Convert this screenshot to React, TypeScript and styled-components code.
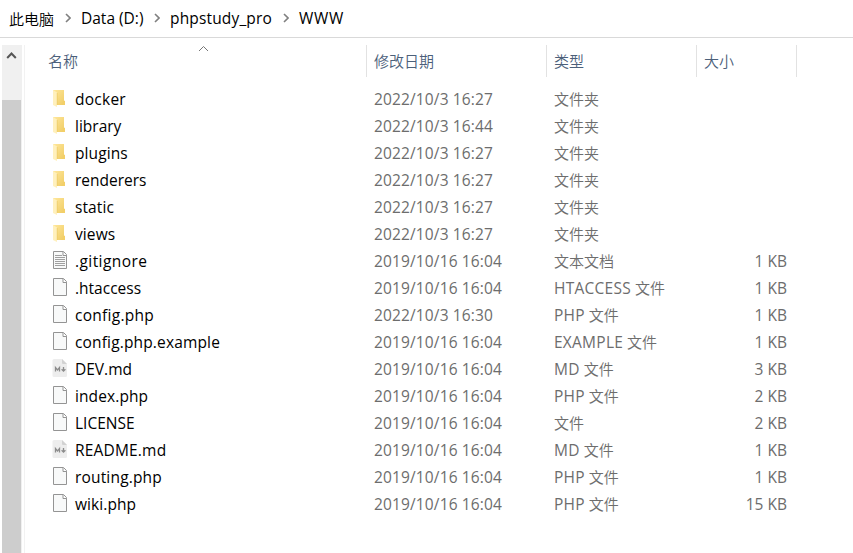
import React from "react";
import styled, { createGlobalStyle } from "styled-components";

const GlobalStyle = createGlobalStyle`
  * { box-sizing: border-box; }
  body {
    margin: 0;
    background: #fff;
    overflow: hidden;
    font-family: "Open Sans", "Noto Sans CJK SC", sans-serif;
    font-size: 15px;
    color: #000;
  }
`;

const Window = styled.div`
  display: flex;
  flex-direction: column;
  width: 853px;
  height: 553px;
  background: #fff;
  overflow: hidden;
`;

const AddressBar = styled.nav`
  display: flex;
  align-items: center;
  height: 38px;
  flex: none;
  padding: 0 0 1px 9px;
  border-bottom: 1px solid #d9d9d9;
`;

const Crumb = styled.span<{ $width: number; $size: number; $tracking: number }>`
  width: ${(p) => p.$width}px;
  line-height: 22px;
  font-size: ${(p) => p.$size}px;
  letter-spacing: ${(p) => p.$tracking}px;
  white-space: nowrap;
`;

const CrumbArrow = styled.svg`
  width: 6px;
  height: 10px;
  flex: none;
  margin: 0 10px 1px;
`;

const Body = styled.div`
  display: flex;
  flex: 1;
  min-height: 0;
  padding: 7px 0 0 2px;
`;

const ScrollTrack = styled.div`
  display: flex;
  flex-direction: column;
  width: 20px;
  background: #f0f0f0;
`;

const ScrollUp = styled.div`
  display: flex;
  justify-content: center;
  height: 55px;
  padding: 6px 1px 0 0;
`;

const ScrollThumb = styled.div`
  flex: 1;
  width: 19px;
  background: #cdcdcd;
`;

const Pane = styled.main`
  flex: 1;
  margin-left: 2px;
  border-left: 1px solid #f2f2f2;
`;

const Header = styled.div`
  display: grid;
  grid-template-columns: 342px 180px 150px 100px;
  grid-template-rows: 32px;
  height: 32px;
  color: #4c607a;
`;

const HeaderCell = styled.div`
  position: relative;
  padding: 0 0 0 7px;
  line-height: 31px;
  font-family: "Noto Sans CJK SC", sans-serif;
  font-weight: 350;
  border-right: 1px solid #e2e2e2;

  &:first-child { padding-left: 23px; }
`;

const SortMark = styled.svg`
  position: absolute;
  left: 173px;
  top: 0;
`;

const FileRow = styled.div`
  display: grid;
  grid-template-columns: 24px 299px 180px 150px 83px;
  grid-template-rows: 27px;
  align-items: center;
  height: 27px;
  padding-left: 26px;
  color: #6d6d6d;
  line-height: 27px;
  white-space: nowrap;
`;

const Rows = styled.div`
  padding-top: 9px;
`;

const Name = styled.span<{ $tracking: number }>`
  color: #000;
  font-size: 15.5px;
  letter-spacing: ${(p) => p.$tracking}px;
`;

const DateCell = styled.span`
  font-size: 15.5px;
  letter-spacing: 0.14px;
`;

const TypeCell = styled.span`
  display: flex;
  align-items: baseline;
  align-self: start;
  gap: 4px;
`;

const Extension = styled.span`
  font-size: 15.5px;
  letter-spacing: 0.25px;
`;

const Hanzi = styled.span`
  font-family: "Noto Sans CJK SC", sans-serif;
  font-weight: 350;
  line-height: 25px;
`;

const SizeCell = styled.span`
  text-align: right;
  font-size: 15.5px;
`;

const IconSvg = styled.svg`
  display: block;
  margin: -4px 0 0 -1px;
`;

type Kind = "folder" | "text" | "file" | "md";

function FolderIcon() {
  return (
    <IconSvg width="18" height="20" viewBox="0 0 18 20">
      <defs>
        <linearGradient id="folderBack" x1="0" x2="1" y1="0" y2="1">
          <stop offset="0" stopColor="#ffe79b" />
          <stop offset="1" stopColor="#efcb62" />
        </linearGradient>
      </defs>
      <path d="M3 2H14V12.5L15 13V17H3Z" fill="url(#folderBack)" />
      <path d="M13 13H15V17H13Z" fill="#f3cf68" />
      <path d="M3 2L7 4.500V19L3 17Z" fill="#fff0bd" />
      <path d="M7.200 5V17" stroke="#ebc75f" strokeWidth=".6" />
    </IconSvg>
  );
}

function PageIcon({ lines }: { lines?: boolean }) {
  return (
    <IconSvg width="18" height="20" viewBox="0 0 18 20">
      <path d="M3.500 1.500H13.500L16.500 4.500V18.500H3.500Z" fill="#f8f9f9" stroke="#949494" />
      <path d="M13 2V5.500H16.500" fill="#fff" stroke="#949494" />
      {lines && (
        <path
          d="M5 5.500H12M5 7.500H15M5 9.500H15M5 11.500H15M5 13.500H15M5 15.500H15"
          stroke="#a0a0a0"
        />
      )}
    </IconSvg>
  );
}

function MarkdownIcon() {
  return (
    <IconSvg width="18" height="20" viewBox="0 0 18 20">
      <path d="M4 1H12L17 6V17.5Q17 19 15.5 19H4Q2.5 19 2.5 17.5V2.5Q2.5 1 4 1Z" fill="#ededed" />
      <path d="M12 1L17 6H13Q12 6 12 5Z" fill="#d2d2d2" />
      <path d="M5.500 13.500V9.500L7.500 12L9.500 9.500V13.500" fill="none" stroke="#8b8b8b" strokeWidth="1.300" />
      <path d="M13.500 9V12.800M11.600 11.300L13.500 13.200L15.400 11.300" fill="none" stroke="#8b8b8b" strokeWidth="1.300" />
    </IconSvg>
  );
}

function FileIcon({ kind }: { kind: Kind }) {
  if (kind === "folder") return <FolderIcon />;
  if (kind === "md") return <MarkdownIcon />;
  return <PageIcon lines={kind === "text"} />;
}

interface Entry {
  kind: Kind;
  name: string;
  date: string;
  extension?: string;
  type: string;
  size?: string;
  tracking: number;
}

const entries: Entry[] = [
  { kind: "folder", name: "docker", date: "2022/10/3 16:27", type: "文件夹", tracking: 0.25 },
  { kind: "folder", name: "library", date: "2022/10/3 16:44", type: "文件夹", tracking: 0 },
  { kind: "folder", name: "plugins", date: "2022/10/3 16:27", type: "文件夹", tracking: 0.1 },
  { kind: "folder", name: "renderers", date: "2022/10/3 16:27", type: "文件夹", tracking: 0 },
  { kind: "folder", name: "static", date: "2022/10/3 16:27", type: "文件夹", tracking: 0.1 },
  { kind: "folder", name: "views", date: "2022/10/3 16:27", type: "文件夹", tracking: 0.1 },
  { kind: "text", name: ".gitignore", date: "2019/10/16 16:04", type: "文本文档", size: "1 KB", tracking: 0.42 },
  { kind: "file", name: ".htaccess", date: "2019/10/16 16:04", extension: "HTACCESS", type: "文件", size: "1 KB", tracking: 0 },
  { kind: "file", name: "config.php", date: "2022/10/3 16:30", extension: "PHP", type: "文件", size: "1 KB", tracking: 0.27 },
  { kind: "file", name: "config.php.example", date: "2019/10/16 16:04", extension: "EXAMPLE", type: "文件", size: "1 KB", tracking: 0.15 },
  { kind: "md", name: "DEV.md", date: "2019/10/16 16:04", extension: "MD", type: "文件", size: "3 KB", tracking: 0 },
  { kind: "file", name: "index.php", date: "2019/10/16 16:04", extension: "PHP", type: "文件", size: "2 KB", tracking: 0.1 },
  { kind: "file", name: "LICENSE", date: "2019/10/16 16:04", type: "文件", size: "2 KB", tracking: 0 },
  { kind: "md", name: "README.md", date: "2019/10/16 16:04", extension: "MD", type: "文件", size: "1 KB", tracking: 0.18 },
  { kind: "file", name: "routing.php", date: "2019/10/16 16:04", extension: "PHP", type: "文件", size: "1 KB", tracking: 0.17 },
  { kind: "file", name: "wiki.php", date: "2019/10/16 16:04", extension: "PHP", type: "文件", size: "15 KB", tracking: 0.08 },
];

const crumbs = [
  { label: "此电脑", width: 46, size: 15, tracking: 0 },
  { label: "Data (D:)", width: 63, size: 15.5, tracking: 0 },
  { label: "phpstudy_pro", width: 103, size: 15.5, tracking: 0.16 },
  { label: "WWW", width: 50, size: 15.5, tracking: 0.7 },
];

export default function App() {
  return (
    <Window>
      <GlobalStyle />
      <AddressBar>
        {crumbs.map((c, i) => (
          <React.Fragment key={c.label}>
            {i > 0 && (
              <CrumbArrow viewBox="0 0 6 10">
                <path d="M1 1L5 5L1 9" fill="none" stroke="#808080" strokeWidth="1.6" />
              </CrumbArrow>
            )}
            <Crumb $width={c.width} $size={c.size} $tracking={c.tracking}>
              {i === 0 ? <Hanzi>{c.label}</Hanzi> : c.label}
            </Crumb>
          </React.Fragment>
        ))}
      </AddressBar>
      <Body>
        <ScrollTrack>
          <ScrollUp>
            <svg width="11" height="10" viewBox="0 0 11 10">
              <path d="M1.200 7L5.500 2.500L9.800 7" fill="none" stroke="#555" strokeWidth="2" />
            </svg>
          </ScrollUp>
          <ScrollThumb />
        </ScrollTrack>
        <Pane>
          <Header>
            <HeaderCell>
              名称
              <SortMark width="11" height="7" viewBox="0 0 11 7">
                <path d="M1 6L5.500 1.500L10 6" fill="none" stroke="#777" />
              </SortMark>
            </HeaderCell>
            <HeaderCell>修改日期</HeaderCell>
            <HeaderCell>类型</HeaderCell>
            <HeaderCell>大小</HeaderCell>
          </Header>
          <Rows>
            {entries.map((e) => (
              <FileRow key={e.name}>
                <FileIcon kind={e.kind} />
                <Name $tracking={e.tracking}>{e.name}</Name>
                <DateCell>{e.date}</DateCell>
                <TypeCell>
                  {e.extension && <Extension>{e.extension}</Extension>}
                  <Hanzi>{e.type}</Hanzi>
                </TypeCell>
                <SizeCell>{e.size}</SizeCell>
              </FileRow>
            ))}
          </Rows>
        </Pane>
      </Body>
    </Window>
  );
}
